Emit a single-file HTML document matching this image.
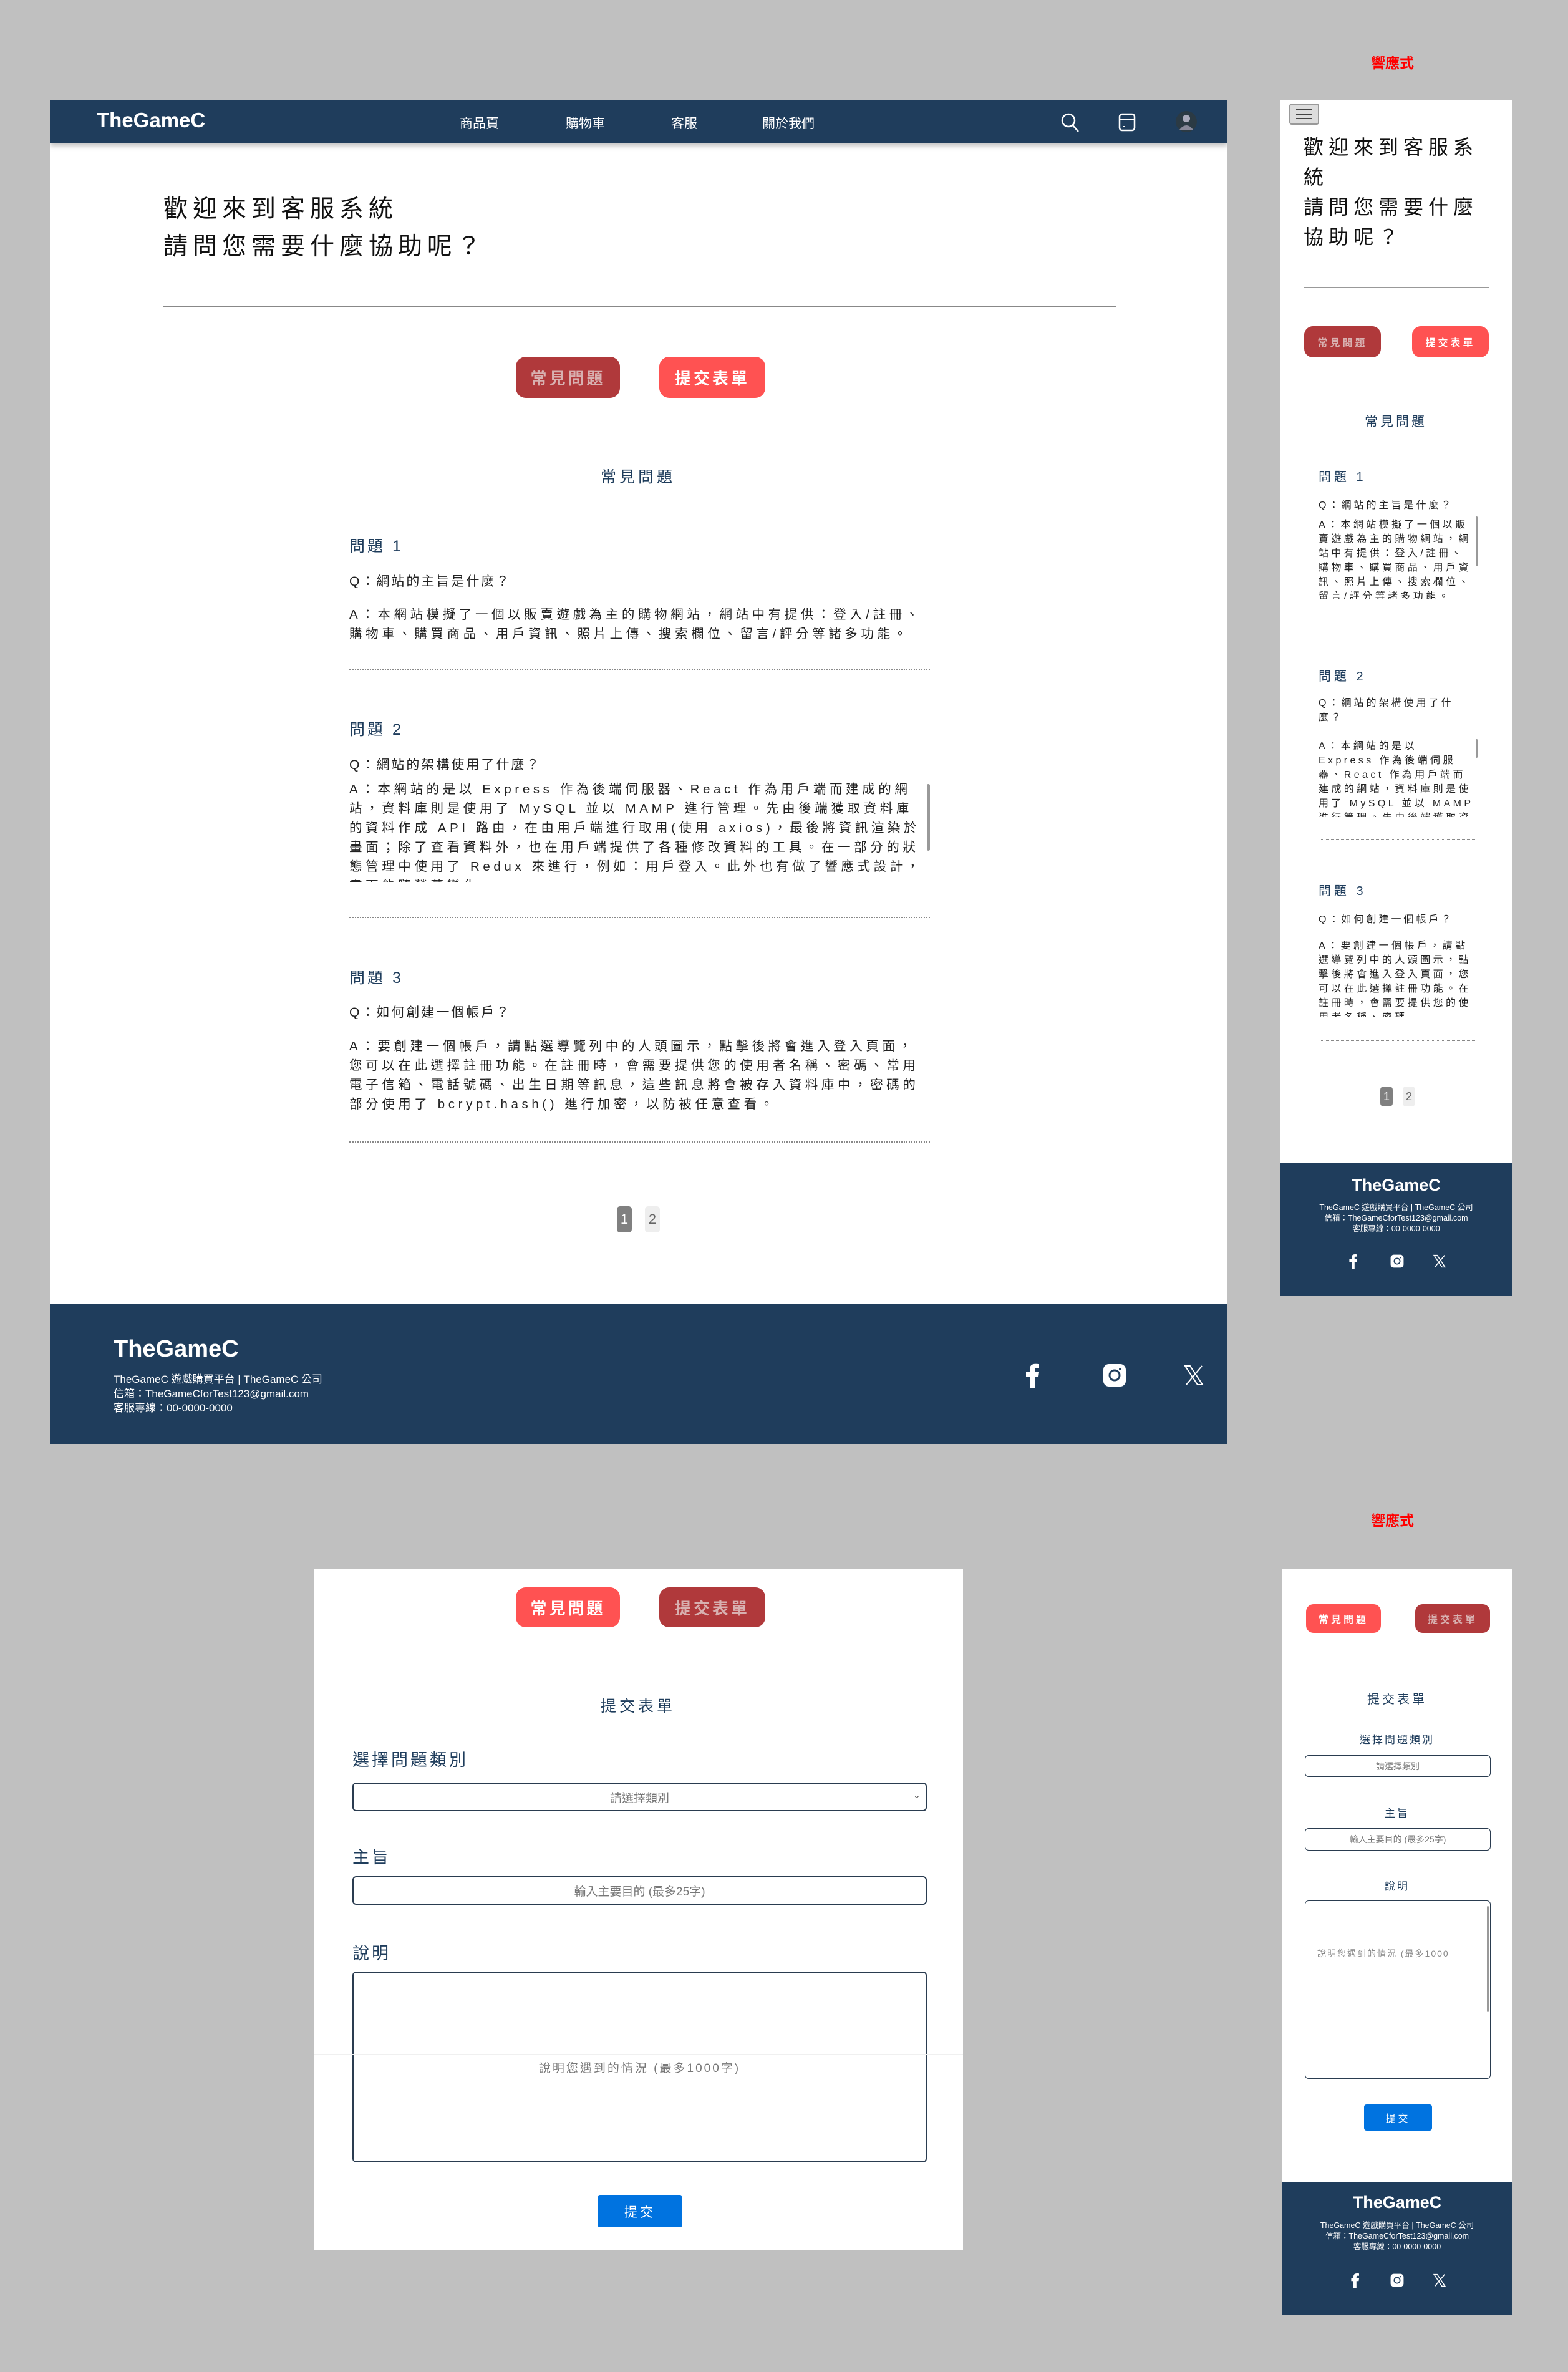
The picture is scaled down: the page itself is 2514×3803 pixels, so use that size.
<!DOCTYPE html>
<html><head><meta charset="utf-8">
<style>
*{margin:0;padding:0;box-sizing:border-box}
html,body{width:2514px;height:3803px;background:#c0c0c0;overflow:hidden;font-family:"Liberation Sans","Noto Sans CJK TC",sans-serif}
.a{position:absolute}
.frame{position:absolute;background:#fff;overflow:hidden}
.navy{background:#1f3d5c}
.btn{position:absolute;border-radius:16px;color:#fff;font-weight:bold;display:flex;align-items:center;justify-content:center;letter-spacing:4px}
.dark{background:#b0393b;color:#d8b0b0}
.light{background:#ff5252;color:#fff}
.blue{color:#1f3d5c}
.dot{position:absolute;border-top:2px dotted #888;height:0}
.ans{position:absolute;overflow:hidden;color:#222}
.sb{position:absolute;background:#999;border-radius:3px}
.pg{position:absolute;border-radius:5px;display:flex;align-items:center;justify-content:center}
.inp{position:absolute;border:2px solid #2a3c50;border-radius:6px;display:flex;align-items:center;justify-content:center;color:#777}
.ft{color:#fff}
.dans{font-size:20.5px;letter-spacing:5.6px;line-height:31px;width:925px}
.mans{font-size:16px;letter-spacing:4.4px;line-height:23px;width:252px}
</style></head><body>

<!-- Desktop FAQ frame -->
<div class="frame" style="left:80px;top:160px;width:1888px;height:2155px">
  <div class="a navy" style="left:0;top:0;width:1888px;height:70px;box-shadow:0 4px 8px rgba(0,0,0,.25)"></div>
  <div class="a ft" style="left:75px;top:14px;font-size:33px;font-weight:bold">TheGameC</div>
  <div class="a ft" style="left:657px;top:22px;font-size:21px">商品頁</div>
  <div class="a ft" style="left:827px;top:22px;font-size:21px">購物車</div>
  <div class="a ft" style="left:996px;top:22px;font-size:21px">客服</div>
  <div class="a ft" style="left:1142px;top:22px;font-size:21px">關於我們</div>
  <svg class="a" style="left:1620px;top:20px" width="32" height="34" viewBox="0 0 32 34"><circle cx="13" cy="13" r="10" fill="none" stroke="#fff" stroke-width="2.5"/><path d="M20 21 L29 31" stroke="#fff" stroke-width="2.5"/></svg>
  <svg class="a" style="left:1712px;top:20px" width="30" height="32" viewBox="0 0 30 32"><rect x="3" y="3" width="24" height="26" rx="4" fill="none" stroke="#fff" stroke-width="2.5"/><path d="M3 12 H27" stroke="#fff" stroke-width="2"/><path d="M9 23h3" stroke="#fff" stroke-width="2"/></svg>
  <svg class="a" style="left:1804px;top:16px" width="36" height="38" viewBox="0 0 36 38"><circle cx="18" cy="19" r="17" fill="#2b3a44"/><circle cx="18" cy="14" r="6" fill="#aab"/><path d="M7 32 Q18 18 29 32" fill="#889"/></svg>

  <div class="a" style="left:182px;top:146px;font-size:39px;letter-spacing:8px;color:#111;line-height:60px">歡迎來到客服系統<br>請問您需要什麼協助呢？</div>
  <div class="a" style="left:182px;top:331px;width:1527px;height:2px;background:#888"></div>

  <div class="btn dark" style="left:747px;top:412px;width:167px;height:66px;font-size:26px">常見問題</div>
  <div class="btn light" style="left:977px;top:412px;width:170px;height:66px;font-size:26px">提交表單</div>

  <div class="a blue" style="left:843px;top:585px;width:200px;text-align:center;font-size:25px;letter-spacing:5px">常見問題</div>

  <div class="a blue" style="left:480px;top:696px;font-size:25px;letter-spacing:4px">問題 1</div>
  <div class="a" style="left:480px;top:756px;font-size:21px;letter-spacing:3px;color:#222">Q：網站的主旨是什麼？</div>
  <div class="ans dans" style="left:480px;top:810px">A：本網站模擬了一個以販賣遊戲為主的購物網站，網站中有提供：登入/註冊、購物車、購買商品、用戶資訊、照片上傳、搜索欄位、留言/評分等諸多功能。</div>
  <div class="dot" style="left:480px;top:913px;width:931px"></div>

  <div class="a blue" style="left:480px;top:990px;font-size:25px;letter-spacing:4px">問題 2</div>
  <div class="a" style="left:480px;top:1050px;font-size:21px;letter-spacing:3px;color:#222">Q：網站的架構使用了什麼？</div>
  <div class="ans dans" style="left:480px;top:1090px;height:164px">A：本網站的是以 Express 作為後端伺服器、React 作為用戶端而建成的網站，資料庫則是使用了 MySQL 並以 MAMP 進行管理。先由後端獲取資料庫的資料作成 API 路由，在由用戶端進行取用(使用 axios)，最後將資訊渲染於畫面；除了查看資料外，也在用戶端提供了各種修改資料的工具。在一部分的狀態管理中使用了 Redux 來進行，例如：用戶登入。此外也有做了響應式設計，畫面能隨螢幕變化。</div>
  <div class="sb" style="left:1406px;top:1097px;width:5px;height:107px"></div>
  <div class="dot" style="left:480px;top:1310px;width:931px"></div>

  <div class="a blue" style="left:480px;top:1388px;font-size:25px;letter-spacing:4px">問題 3</div>
  <div class="a" style="left:480px;top:1447px;font-size:21px;letter-spacing:3px;color:#222">Q：如何創建一個帳戶？</div>
  <div class="ans dans" style="left:480px;top:1502px">A：要創建一個帳戶，請點選導覽列中的人頭圖示，點擊後將會進入登入頁面，您可以在此選擇註冊功能。在註冊時，會需要提供您的使用者名稱、密碼、常用電子信箱、電話號碼、出生日期等訊息，這些訊息將會被存入資料庫中，密碼的部分使用了 bcrypt.hash() 進行加密，以防被任意查看。</div>
  <div class="dot" style="left:480px;top:1670px;width:931px"></div>

  <div class="pg" style="left:909px;top:1774px;width:24px;height:42px;background:#808080;color:#fff;font-size:22px">1</div>
  <div class="pg" style="left:954px;top:1774px;width:24px;height:42px;background:#eee;color:#666;font-size:22px">2</div>

  <div class="a navy" style="left:0;top:1930px;width:1888px;height:225px"></div>
  <div class="a ft" style="left:102px;top:1982px;font-size:38px;font-weight:bold">TheGameC</div>
  <div class="a ft" style="left:102px;top:2040px;font-size:17px;line-height:23px">TheGameC 遊戲購買平台 | TheGameC 公司<br>信箱：TheGameCforTest123@gmail.com<br>客服專線：00-0000-0000</div>
  <svg class="a" style="left:1565px;top:2025px" width="22" height="40" viewBox="0 0 22 40"><path d="M14 40V22h6l1-7h-7v-4c0-2 1-3 3-3h4V2c-1 0-3-.3-6-.3-6 0-9 3-9 9V15H0v7h6v18z" fill="#fff"/></svg>
  <svg class="a" style="left:1688px;top:2026px" width="38" height="38" viewBox="0 0 38 38"><rect x="1" y="1" width="36" height="36" rx="9" fill="#fff"/><circle cx="19" cy="19" r="8" fill="none" stroke="#1f3d5c" stroke-width="3"/><circle cx="28" cy="9" r="2" fill="#1f3d5c"/></svg>
  <svg class="a" style="left:1818px;top:2028px" width="32" height="34" viewBox="0 0 32 34"><path d="M2 2h8l20 30h-8z" fill="none" stroke="#fff" stroke-width="2"/><path d="M29 2L4 32" stroke="#fff" stroke-width="2"/></svg>
</div>

<!-- 響應式 labels -->
<div class="a" style="left:2198px;top:82px;font-size:23px;font-weight:bold;color:#f00">響應式</div>
<div class="a" style="left:2198px;top:2419px;font-size:23px;font-weight:bold;color:#f00">響應式</div>

<!-- Mobile FAQ frame -->
<div class="frame" style="left:2053px;top:160px;width:371px;height:1918px">
  <div class="a" style="left:14px;top:6px;width:48px;height:34px;border:2px solid #999;border-radius:4px;background:#ddd"></div>
  <div class="a" style="left:25px;top:15px;width:26px;height:2px;background:#444;box-shadow:0 7px 0 #444,0 14px 0 #444"></div>
  <div class="a" style="left:37px;top:52px;width:300px;font-size:32px;letter-spacing:8px;color:#111;line-height:48px">歡迎來到客服系統<br>請問您需要什麼協助呢？</div>
  <div class="a" style="left:37px;top:300px;width:298px;height:1px;background:#999"></div>
  <div class="btn dark" style="left:38px;top:363px;width:123px;height:50px;font-size:16px;border-radius:14px">常見問題</div>
  <div class="btn light" style="left:211px;top:363px;width:123px;height:50px;font-size:16px;border-radius:14px">提交表單</div>
  <div class="a blue" style="left:85px;top:500px;width:200px;text-align:center;font-size:21px;letter-spacing:4px">常見問題</div>

  <div class="a blue" style="left:61px;top:588px;font-size:20px;letter-spacing:5px">問題 1</div>
  <div class="a" style="left:61px;top:636px;font-size:16px;letter-spacing:4px;color:#222">Q：網站的主旨是什麼？</div>
  <div class="ans mans" style="left:61px;top:670px;height:130px">A：本網站模擬了一個以販賣遊戲為主的購物網站，網站中有提供：登入/註冊、購物車、購買商品、用戶資訊、照片上傳、搜索欄位、留言/評分等諸多功能。</div>
  <div class="sb" style="left:313px;top:668px;width:3px;height:80px"></div>
  <div class="dot" style="left:61px;top:843px;width:251px;border-top-width:1px"></div>

  <div class="a blue" style="left:61px;top:908px;font-size:20px;letter-spacing:5px">問題 2</div>
  <div class="a" style="left:61px;top:956px;width:250px;font-size:16px;letter-spacing:4px;line-height:23px;color:#222">Q：網站的架構使用了什麼？</div>
  <div class="ans mans" style="left:61px;top:1025px;height:125px">A：本網站的是以 Express 作為後端伺服器、React 作為用戶端而建成的網站，資料庫則是使用了 MySQL 並以 MAMP 進行管理。先由後端獲取資料庫的資料</div>
  <div class="sb" style="left:313px;top:1025px;width:3px;height:30px"></div>
  <div class="dot" style="left:61px;top:1185px;width:251px;border-top-width:1px"></div>

  <div class="a blue" style="left:61px;top:1252px;font-size:20px;letter-spacing:5px">問題 3</div>
  <div class="a" style="left:61px;top:1300px;font-size:16px;letter-spacing:4px;color:#222">Q：如何創建一個帳戶？</div>
  <div class="ans mans" style="left:61px;top:1345px;height:125px">A：要創建一個帳戶，請點選導覽列中的人頭圖示，點擊後將會進入登入頁面，您可以在此選擇註冊功能。在註冊時，會需要提供您的使用者名稱、密碼</div>
  <div class="dot" style="left:61px;top:1508px;width:251px;border-top-width:1px"></div>

  <div class="pg" style="left:160px;top:1582px;width:20px;height:32px;background:#808080;color:#fff;font-size:18px">1</div>
  <div class="pg" style="left:196px;top:1582px;width:20px;height:32px;background:#eee;color:#666;font-size:18px">2</div>

  <div class="a navy" style="left:0;top:1704px;width:371px;height:214px"></div>
  <div class="a ft" style="left:0;top:1725px;width:371px;text-align:center;font-size:27px;font-weight:bold">TheGameC</div>
  <div class="a ft" style="left:0;top:1768px;width:371px;text-align:center;font-size:12.5px;line-height:17px">TheGameC 遊戲購買平台 | TheGameC 公司<br>信箱：TheGameCforTest123@gmail.com<br>客服專線：00-0000-0000</div>
  <svg class="a" style="left:110px;top:1850px" width="14" height="24" viewBox="0 0 22 40"><path d="M14 40V22h6l1-7h-7v-4c0-2 1-3 3-3h4V2c-1 0-3-.3-6-.3-6 0-9 3-9 9V15H0v7h6v18z" fill="#fff"/></svg>
  <svg class="a" style="left:176px;top:1851px" width="22" height="22" viewBox="0 0 38 38"><rect x="1" y="1" width="36" height="36" rx="9" fill="#fff"/><circle cx="19" cy="19" r="8" fill="none" stroke="#1f3d5c" stroke-width="3"/><circle cx="28" cy="9" r="2" fill="#1f3d5c"/></svg>
  <svg class="a" style="left:245px;top:1851px" width="20" height="22" viewBox="0 0 32 34"><path d="M2 2h8l20 30h-8z" fill="none" stroke="#fff" stroke-width="2.5"/><path d="M29 2L4 32" stroke="#fff" stroke-width="2.5"/></svg>
</div>

<!-- Desktop form frame -->
<div class="frame" style="left:504px;top:2516px;width:1040px;height:1091px">
  <div class="btn light" style="left:323px;top:29px;width:167px;height:64px;font-size:26px">常見問題</div>
  <div class="btn dark" style="left:553px;top:29px;width:170px;height:64px;font-size:26px">提交表單</div>
  <div class="a blue" style="left:419px;top:200px;width:200px;text-align:center;font-size:25px;letter-spacing:5px">提交表單</div>
  <div class="a blue" style="left:61px;top:284px;font-size:27px;letter-spacing:4px">選擇問題類別</div>
  <div class="inp" style="left:61px;top:342px;width:921px;height:46px;font-size:19px">請選擇類別</div>
  <div class="a" style="left:960px;top:354px;font-size:14px;color:#555">⌄</div>
  <div class="a blue" style="left:61px;top:440px;font-size:27px;letter-spacing:4px">主旨</div>
  <div class="inp" style="left:61px;top:492px;width:921px;height:46px;font-size:19px">輸入主要目的 (最多25字)</div>
  <div class="a blue" style="left:61px;top:594px;font-size:27px;letter-spacing:4px">說明</div>
  <div class="inp" style="left:61px;top:645px;width:921px;height:306px;font-size:19px;letter-spacing:3px">說明您遇到的情況 (最多1000字)</div>
  <div class="a" style="left:0;top:777px;width:1040px;height:1px;background:#f0f0f0"></div>
  <div class="btn" style="left:454px;top:1004px;width:136px;height:51px;background:#0073e0;border-radius:4px;font-weight:normal;font-size:21px">提交</div>
</div>

<!-- Mobile form frame -->
<div class="frame" style="left:2056px;top:2516px;width:368px;height:1195px">
  <div class="btn light" style="left:38px;top:56px;width:120px;height:46px;font-size:16px;border-radius:12px">常見問題</div>
  <div class="btn dark" style="left:213px;top:56px;width:120px;height:46px;font-size:16px;border-radius:12px">提交表單</div>
  <div class="a blue" style="left:84px;top:192px;width:200px;text-align:center;font-size:20px;letter-spacing:4px">提交表單</div>
  <div class="a blue" style="left:84px;top:259px;width:200px;text-align:center;font-size:17px;letter-spacing:3px">選擇問題類別</div>
  <div class="inp" style="left:36px;top:298px;width:298px;height:35px;font-size:14px;border-width:1.5px">請選擇類別</div>
  <div class="a blue" style="left:84px;top:377px;width:200px;text-align:center;font-size:17px;letter-spacing:3px">主旨</div>
  <div class="inp" style="left:36px;top:415px;width:298px;height:36px;font-size:14px;border-width:1.5px">輸入主要目的 (最多25字)</div>
  <div class="a blue" style="left:84px;top:494px;width:200px;text-align:center;font-size:17px;letter-spacing:3px">說明</div>
  <div class="a" style="left:36px;top:531px;width:298px;height:286px;border:1.5px solid #2a3c50;border-radius:6px"></div>
  <div class="a" style="left:56px;top:606px;font-size:14px;color:#888;letter-spacing:2px;white-space:nowrap;width:270px;overflow:hidden">說明您遇到的情況 (最多1000</div>
  <div class="sb" style="left:328px;top:540px;width:3px;height:170px"></div>
  <div class="btn" style="left:131px;top:858px;width:109px;height:42px;background:#0073e0;border-radius:4px;font-weight:normal;font-size:16px">提交</div>
  <div class="a navy" style="left:0;top:982px;width:368px;height:213px"></div>
  <div class="a ft" style="left:0;top:1000px;width:368px;text-align:center;font-size:27px;font-weight:bold">TheGameC</div>
  <div class="a ft" style="left:0;top:1044px;width:368px;text-align:center;font-size:12.5px;line-height:17px">TheGameC 遊戲購買平台 | TheGameC 公司<br>信箱：TheGameCforTest123@gmail.com<br>客服專線：00-0000-0000</div>
  <svg class="a" style="left:110px;top:1128px" width="14" height="24" viewBox="0 0 22 40"><path d="M14 40V22h6l1-7h-7v-4c0-2 1-3 3-3h4V2c-1 0-3-.3-6-.3-6 0-9 3-9 9V15H0v7h6v18z" fill="#fff"/></svg>
  <svg class="a" style="left:173px;top:1129px" width="22" height="22" viewBox="0 0 38 38"><rect x="1" y="1" width="36" height="36" rx="9" fill="#fff"/><circle cx="19" cy="19" r="8" fill="none" stroke="#1f3d5c" stroke-width="3"/><circle cx="28" cy="9" r="2" fill="#1f3d5c"/></svg>
  <svg class="a" style="left:242px;top:1129px" width="20" height="22" viewBox="0 0 32 34"><path d="M2 2h8l20 30h-8z" fill="none" stroke="#fff" stroke-width="2.5"/><path d="M29 2L4 32" stroke="#fff" stroke-width="2.5"/></svg>
</div>

</body></html>
